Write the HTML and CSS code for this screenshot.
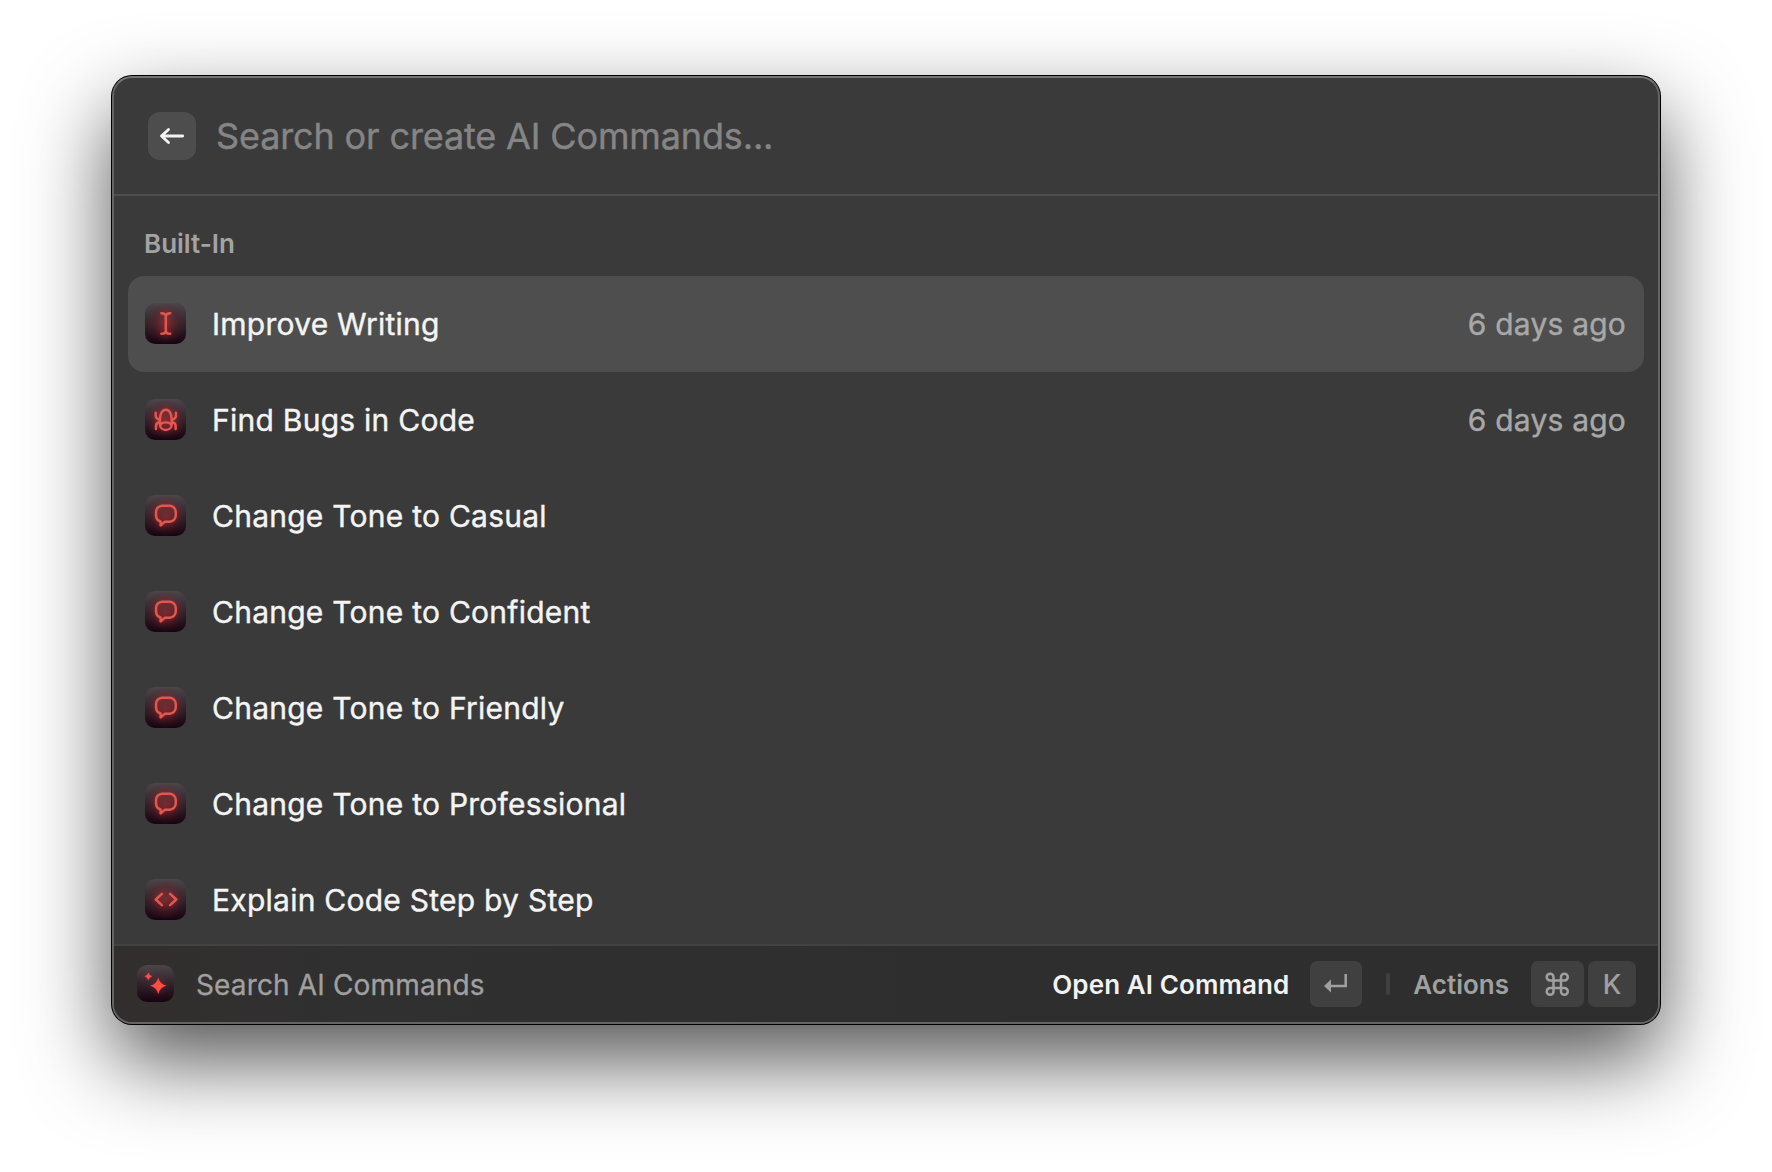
FILE: index.html
```html
<!DOCTYPE html>
<html lang="en">
<head>
<meta charset="utf-8">
<title>AI Commands</title>
<link rel="stylesheet" href="styles.css">
</head>
<body>
<svg class="defs" width="0" height="0" aria-hidden="true">
  <defs>
    <symbol id="bubble" viewBox="0 0 40 40">
      <path d="M16.500 10.500h7.500a6 6 0 0 1 6 6v3.500a6 6 0 0 1-6 6h-4.500l-4.300 3.800v-4c-2.700-.7-4.400-2.800-4.400-5.800v-3.500a6 6 0 0 1 5.700-6z"/>
    </symbol>
  </defs>
</svg>
<main class="window">
  <header class="search">
    <button class="back" aria-label="Back"><svg width="48" height="48" viewBox="0 0 48 48"><path d="M34.700 24H13.500M20.500 17.500L13.500 24l7 6.500"/></svg></button>
    <span class="placeholder">Search or create AI Commands...</span>
  </header>
  <section class="list">
    <h2 class="heading">Built-In</h2>
    <div class="row selected">
      <span class="tile"><svg viewBox="0 0 40 40"><path d="M16 10c2.800 0 4.300 1 4.300 3.200 0-2.200 1.500-3.200 4.300-3.200M20.300 13v14M16 30c2.800 0 4.300-1 4.300-3.200 0 2.200 1.500 3.200 4.300 3.200"/></svg></span>
      <span class="name">Improve Writing</span><span class="time">6 days ago</span>
    </div>
    <div class="row">
      <span class="tile"><svg viewBox="0 0 40 40"><path d="M20.300 10.500c3.300 0 5.700 3.700 5.700 9.500v5c0 3-2.500 5.200-5.700 5.200s-5.700-2.200-5.700-5.200v-5c0-5.800 2.400-9.500 5.700-9.500zM14.800 26c.6-2 2.800-3.200 5.500-3.200s4.900 1.200 5.500 3.200M10.400 13.500v2.500c0 2.500 1.600 3.600 4.200 4.300M14.600 22.500c-2.600.6-3.900 1.700-3.900 3.700v3M30.200 13.500v2.500c0 2.500-1.600 3.600-4.200 4.300M26 22.500c2.600.6 3.900 1.700 3.900 3.700v3"/></svg></span>
      <span class="name">Find Bugs in Code</span><span class="time">6 days ago</span>
    </div>
    <div class="row"><span class="tile"><svg viewBox="0 0 40 40"><use href="#bubble"/></svg></span><span class="name">Change Tone to Casual</span></div>
    <div class="row"><span class="tile"><svg viewBox="0 0 40 40"><use href="#bubble"/></svg></span><span class="name">Change Tone to Confident</span></div>
    <div class="row"><span class="tile"><svg viewBox="0 0 40 40"><use href="#bubble"/></svg></span><span class="name">Change Tone to Friendly</span></div>
    <div class="row"><span class="tile"><svg viewBox="0 0 40 40"><use href="#bubble"/></svg></span><span class="name">Change Tone to Professional</span></div>
    <div class="row"><span class="tile"><svg viewBox="0 0 40 40"><path d="M16.500 14.500l-6 5.500 6 5.500M24.500 14.500l6 5.500-6 5.500"/></svg></span><span class="name">Explain Code Step by Step</span></div>
  </section>
  <footer class="bar">
    <span class="tile small"><svg class="sparkle" viewBox="0 0 40 40"><path d="M23 13.500q1.700 7.300 9 9-7.300 1.700-9 9-1.700-7.300-9-9 7.300-1.700 9-9zM12.300 8q.9 3.300 4.200 4.200-3.300.9-4.200 4.200-.9-3.300-4.200-4.200 3.300-.9 4.200-4.200z"/></svg></span>
    <span class="title">Search AI Commands</span>
    <span class="primary">Open AI Command</span>
    <kbd class="key enter"><svg width="52" height="46" viewBox="0 0 52 46"><path class="line" d="M35.700 13v12H20"/><path class="head" d="M14 25l7-6.500v13z"/></svg></kbd>
    <span class="sep"></span>
    <span class="actions">Actions</span>
    <kbd class="key cmd"><svg width="53" height="46" viewBox="0 0 53 46"><path class="line" d="M22.500 19.500h7.500v7.500h-7.500zM22.500 19.500h-3.400a3.400 3.400 0 1 1 3.400-3.400zM30 19.500v-3.400a3.400 3.400 0 1 1 3.400 3.400zM30 27h3.400a3.400 3.400 0 1 1-3.400 3.400zM22.500 27v3.400a3.400 3.400 0 1 1-3.400-3.400z"/></svg></kbd>
    <kbd class="key k">K</kbd>
  </footer>
</main>
</body>
</html>
```
FILE: styles.css
```css
* { box-sizing: border-box; }
body { margin: 0; width: 1772px; height: 1172px; overflow: hidden; background: #fff; display: grid; justify-content: center; padding-top: 76px; font-family: Inter, sans-serif; }
.defs { position: absolute; }
.window { width: 1548px; height: 948px; border: 2px solid #646464; border-top-color: #757575; border-radius: 20px; background: #3a3a3a; display: flex; flex-direction: column; box-shadow: 0 0 0 1px #000, 0 36px 84px rgba(0,0,0,.68); }
.search { height: 118px; border-bottom: 2px solid #4d4d4d; display: flex; align-items: center; padding: 0 34px; gap: 20px; }
.back { width: 48px; height: 48px; padding: 0; border: 0; border-radius: 12px; background: #4d4d4d; display: block; }
.back svg { display: block; fill: none; stroke: #f4f4f4; stroke-width: 2.800; stroke-linecap: round; stroke-linejoin: round; }
.placeholder { font-size: 36px; font-weight: 400; letter-spacing: -.14px; color: #858585; -webkit-text-stroke: .4px #858585; }
.list { flex: 1; overflow: hidden; padding: 0 14px; }
.heading { height: 80px; margin: 0; padding: 33px 16px 0; font-size: 26px; line-height: 30px; font-weight: 600; color: #a3a3a3; }
.row { height: 96px; border-radius: 16px; display: flex; align-items: center; padding: 0 18px 0 17px; font-size: 30px; font-weight: 400; color: #f4f4f4; }
.name { letter-spacing: .25px; -webkit-text-stroke: .4px #f4f4f4; }
.selected { background: #4e4e4e; }
.tile { flex: none; width: 41px; height: 41px; border-radius: 10px; margin: 0 26px 1px 0; background: radial-gradient(circle at 50% 50%, rgba(160,48,50,.6), rgba(110,28,38,.3) 45%, transparent 70%), linear-gradient(#4d4549, #16030f); }
.tile svg { display: block; width: 100%; height: 100%; fill: none; stroke: #e45650; stroke-width: 2.400; stroke-linecap: round; stroke-linejoin: round; filter: drop-shadow(0 0 3px rgba(230,60,55,.4)); }
.time { margin-left: auto; color: #a8a8a8; letter-spacing: .2px; -webkit-text-stroke: .4px #a8a8a8; }
.bar { height: 78px; border-top: 2px solid #424242; border-radius: 0 0 18px 18px; background: linear-gradient(90deg, #332e2e, #303030 16%, #2e2e2e 60%); display: flex; align-items: center; padding: 0 22px 0 23px; font-size: 28px; color: #a0a0a0; }
.title { font-weight: 400; letter-spacing: .15px; padding-top: 2px; -webkit-text-stroke: .3px #a0a0a0; }
.tile.small { width: 37px; height: 37px; margin-right: 22px; background: linear-gradient(#4d4549, #16030f); }
.tile .sparkle { fill: #ff4d45; stroke: none; }
.primary { margin-left: auto; color: #f2f2f2; font-weight: 600; font-size: 26px; letter-spacing: .1px; margin-right: 21px; }
.key { height: 46px; border-radius: 7px; background: #404040; font: 500 27px Inter, sans-serif; display: grid; place-items: center; }
.key svg { display: block; }
.key .line { fill: none; stroke: #a0a0a0; stroke-width: 2.500; }
.key .head { fill: #a0a0a0; }
.enter { width: 52px; }
.sep { width: 4px; height: 22px; border-radius: 2px; background: #404040; margin: 0 24px 0 24px; }
.actions { font-weight: 600; font-size: 26px; margin-right: 22px; }
.sep { margin-right: 23px; }
.cmd { width: 53px; margin-right: 4px; }
.k { width: 48px; }
```
